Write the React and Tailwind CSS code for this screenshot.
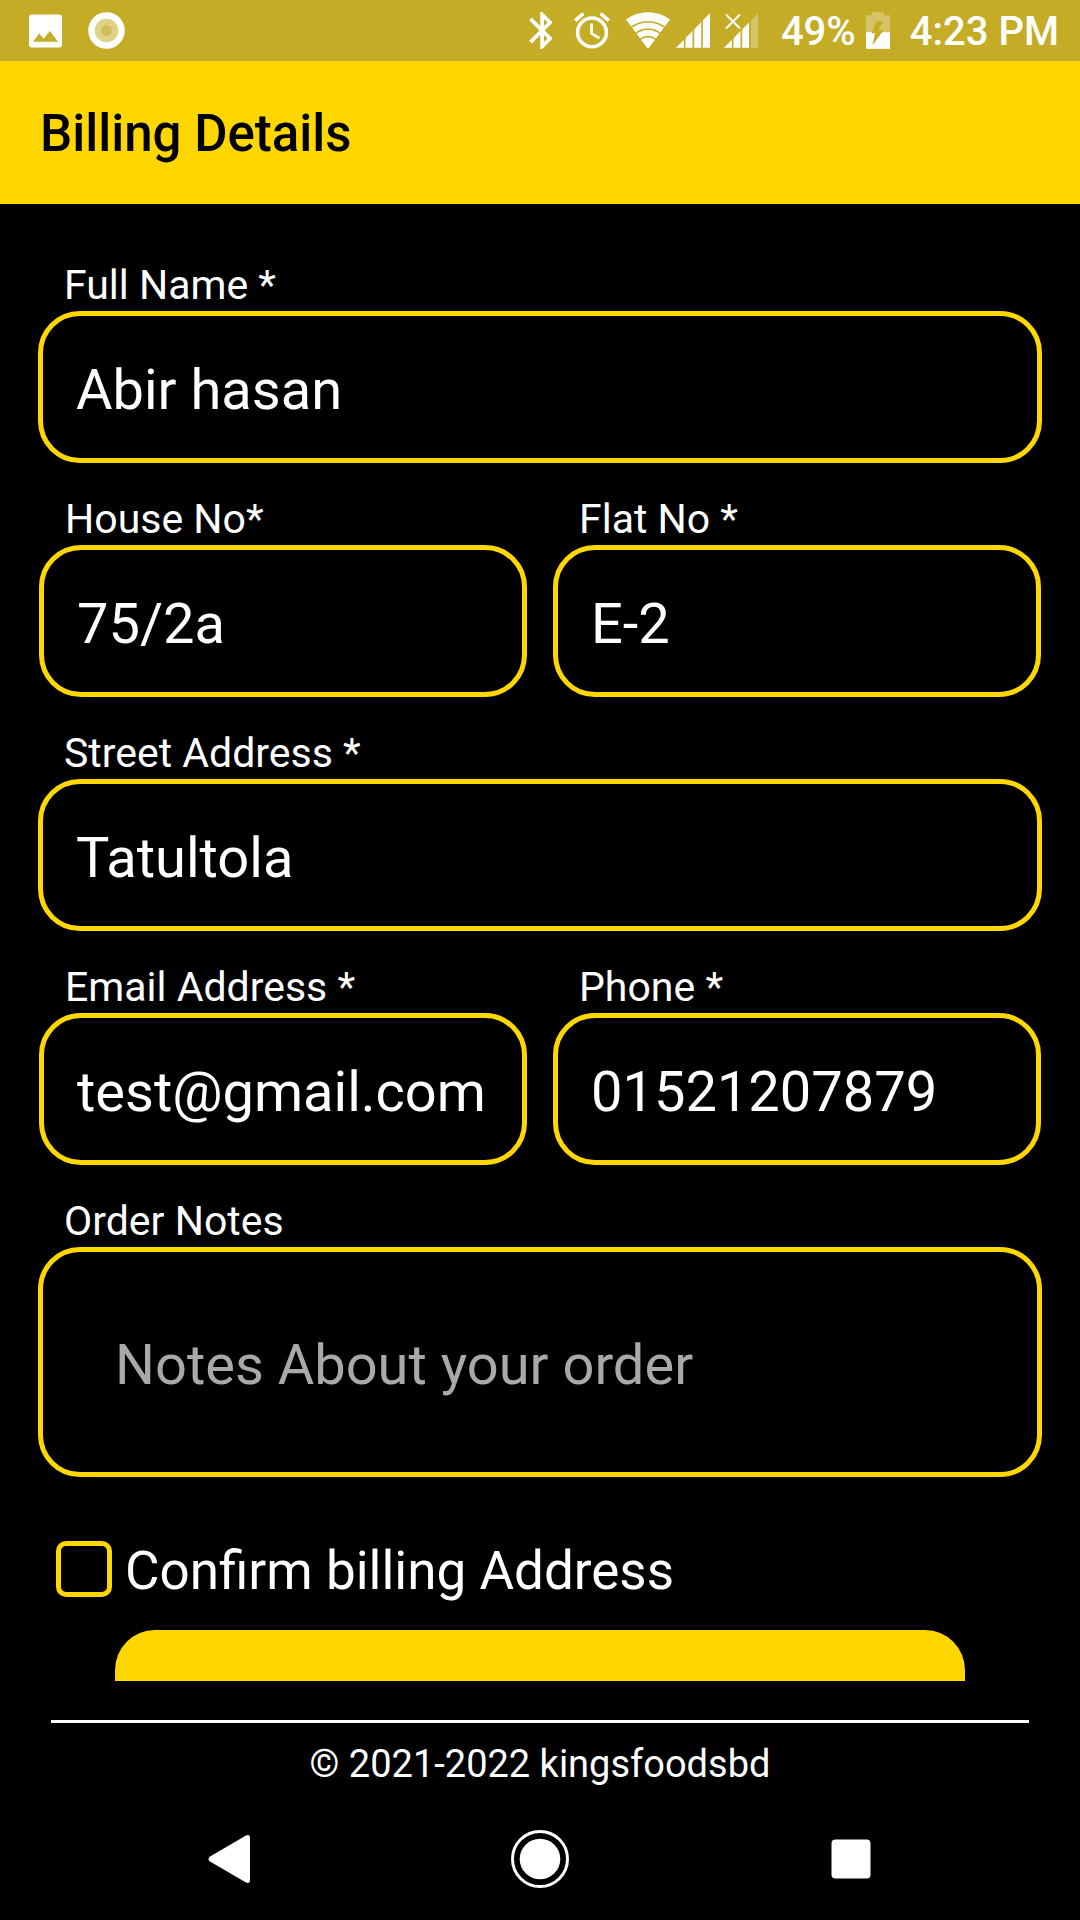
import { useState } from "react";

const FONT = "font-['Roboto',sans-serif]";

function StatusBar() {
  return (
    <div className="flex h-[61px] shrink-0 items-center justify-between bg-[#c5ac27] pr-[21px] pl-[28px] text-white">
      <div className="flex items-center gap-[25px]">
        <svg width="35" height="36" viewBox="0 0 35 36" fill="currentColor" aria-hidden="true">
          <path
            fillRule="evenodd"
            d="M4 1.500h27a3 3 0 0 1 3 3v27a3 3 0 0 1-3 3H4a3 3 0 0 1-3-3v-27a3 3 0 0 1 3-3zM5 28.700h25L22 18l-6.300 7.700-4.400-5.300z"
          />
        </svg>
        <svg width="37" height="37" viewBox="0 0 37 37" fill="currentColor" aria-hidden="true">
          <circle cx="18.500" cy="18.500" r="15" fill="none" stroke="currentColor" strokeWidth="6.500" />
          <circle cx="18.500" cy="18.500" r="12" opacity="0.45" />
          <circle cx="18.500" cy="18.500" r="5.500" fill="#c5ac27" opacity="0.5" />
        </svg>
      </div>
      <div className="flex items-center text-[40px] leading-[48px] font-medium">
        <svg className="mr-[21px]" width="24" height="37" viewBox="4.900 2 13 20" fill="currentColor" aria-hidden="true">
          <path d="M17.710 7.710L12 2h-1v7.590L6.410 5 5 6.410 10.590 12 5 17.590 6.410 19 11 14.410V22h1l5.710-5.710-4.300-4.290 4.300-4.290zM13 5.830l1.880 1.880L13 9.590V5.830zm1.880 10.460L13 18.170v-3.760l1.880 1.880z" />
        </svg>
        <svg className="mr-[16px]" width="36" height="37" viewBox="2 1.800 20 20.300" fill="currentColor" aria-hidden="true">
          <path d="M22 5.720l-4.600-3.860-1.290 1.530 4.600 3.860L22 5.720zM7.880 3.390L6.600 1.860 2 5.710l1.290 1.530 4.590-3.850zM12.500 8H11v6l4.750 2.850.75-1.230-4-2.370V8zM12 4a9 9 0 1 0 0 18 9 9 0 0 0 0-18zm0 16a7 7 0 1 1 0-14 7 7 0 0 1 0 14z" />
        </svg>
        <svg className="mr-[6px]" width="44" height="37" viewBox="0 0 131 110" aria-hidden="true">
          <path d="M65.500 110L0 22A110 110 0 0 1 131 22z" fill="currentColor" />
          <g fill="none" stroke="#c5ac27" strokeWidth="5">
            <circle cx="65.500" cy="110" r="81" />
            <circle cx="65.500" cy="110" r="59" />
            <circle cx="65.500" cy="110" r="37" />
          </g>
        </svg>
        <svg className="mr-[14px]" width="34" height="35" viewBox="0 0 102 104" aria-hidden="true">
          <path d="M0 104L102 0V104z" fill="currentColor" />
          <path d="M26 0V104M52 0V104M78 0V104" stroke="#c5ac27" strokeWidth="5" />
        </svg>
        <svg className="mr-[23px]" width="34" height="35" viewBox="0 0 102 104" aria-hidden="true">
          <path d="M0 104L76 27V104z" fill="currentColor" />
          <path d="M81 22L102 0V104H81z" fill="currentColor" opacity="0.3" />
          <path d="M26 60V104M52 40V104M78 20V104" stroke="#c5ac27" strokeWidth="5" />
          <path d="M6 4L48 46M48 4L6 46" stroke="#c5ac27" strokeWidth="14" />
          <path d="M6 4L48 46M48 4L6 46" stroke="currentColor" strokeWidth="6" />
        </svg>
        <span className="pt-[3px]">49%</span>
        <svg className="mx-[10px]" width="24" height="37" viewBox="0 0 72 110" fill="currentColor" aria-hidden="true">
          <path d="M18 0H54V9H72V60H0V9H18z" opacity="0.3" />
          <path d="M0 60H72V110H0z" />
          <path d="M30 27H51L38 54H53L19 100L27 63H17z" fill="#c5ac27" />
        </svg>
        <span className="ml-[10px] pt-[3px]">4:23 PM</span>
      </div>
    </div>
  );
}

function Field({ id, label, type = "text", defaultValue }) {
  return (
    <div className="min-w-0 flex-1">
      <label htmlFor={id} className="block pl-[26px] text-[41px] leading-[52px]">
        {label}
      </label>
      <input
        id={id}
        type={type}
        defaultValue={defaultValue}
        className="block h-[152px] w-full rounded-[42px] border-5 border-[#ffd700] bg-black px-[33px] pt-[6px] text-[56px] text-white outline-none"
      />
    </div>
  );
}

function NavBar() {
  return (
    <nav className="flex h-[122px] shrink-0 items-center justify-around px-[75px] text-white">
      <button type="button" aria-label="Back">
        <svg width="50" height="50" viewBox="0 0 50 50" fill="currentColor" aria-hidden="true">
          <path d="M6 22.500L42 1.500Q46 0 46 4V46Q46 50 42 48.500L6 27.500Q3 25 6 22.500z" />
        </svg>
      </button>
      <button type="button" aria-label="Home">
        <svg width="58" height="58" viewBox="0 0 58 58" aria-hidden="true">
          <circle cx="29" cy="29" r="27.500" fill="none" stroke="currentColor" strokeWidth="3" />
          <circle cx="29" cy="29" r="20.300" fill="currentColor" />
        </svg>
      </button>
      <button type="button" aria-label="Recent apps">
        <svg width="50" height="50" viewBox="0 0 50 50" fill="currentColor" aria-hidden="true">
          <rect x="5.500" y="5.500" width="39" height="39" rx="4" />
        </svg>
      </button>
    </nav>
  );
}

export default function App() {
  const [confirmed, setConfirmed] = useState(false);
  return (
    <div className={`flex h-screen flex-col overflow-hidden bg-black text-white ${FONT}`}>
      <StatusBar />
      <header className="flex h-[143px] shrink-0 items-center bg-[#ffd700] px-10 pt-1">
        <h1 className="text-[51px] font-medium text-black">Billing Details</h1>
      </header>
      <main className="min-h-0 flex-1 overflow-y-auto px-[38px] pt-[55px] [scrollbar-width:none]">
        <form className="flex flex-col" onSubmit={(e) => e.preventDefault()}>
          <div className="flex flex-col gap-[30px]">
            <Field id="name" label="Full Name *" defaultValue="Abir hasan" />
            <div className="flex gap-[26px] px-px">
              <Field id="house" label="House No*" defaultValue="75/2a" />
              <Field id="flat" label="Flat No *" defaultValue="E-2" />
            </div>
            <Field id="street" label="Street Address *" defaultValue="Tatultola" />
            <div className="flex gap-[26px] px-px">
              <Field id="email" label="Email Address *" type="email" defaultValue="test@gmail.com" />
              <Field id="phone" label="Phone *" type="tel" defaultValue="01521207879" />
            </div>
            <div>
              <label htmlFor="notes" className="block pl-[26px] text-[41px] leading-[52px]">
                Order Notes
              </label>
              <textarea
                id="notes"
                rows={1}
                placeholder="Notes About your order"
                className="block h-[230px] w-full resize-none rounded-[42px] border-5 border-[#ffd700] bg-black px-[72px] pt-[80px] pb-[74px] text-[56px] leading-[66px] text-white outline-none placeholder:text-[#a9a9a9]"
              />
            </div>
          </div>
          <div className="mt-[64px] ml-[18px] flex items-center gap-[13px]">
            <input
              id="confirm"
              type="checkbox"
              checked={confirmed}
              onChange={(e) => setConfirmed(e.target.checked)}
              className="size-[56px] shrink-0 appearance-none rounded-[10px] border-5 border-[#ffd700] bg-black checked:bg-[#ffd700]"
            />
            <label htmlFor="confirm" className="pt-1 text-[53px] leading-[52px]">
              Confirm billing Address
            </label>
          </div>
          <button type="submit" aria-label="Submit" className="mx-[77px] mt-[33px] h-[150px] rounded-[40px] bg-[#ffd700]" />
        </form>
      </main>
      <footer className="mx-[51px] mt-[39px] h-[78px] shrink-0 border-t-3 border-white pt-[15px] text-center text-[38px] leading-[52px]">
        © 2021-2022 kingsfoodsbd
      </footer>
      <NavBar />
    </div>
  );
}
